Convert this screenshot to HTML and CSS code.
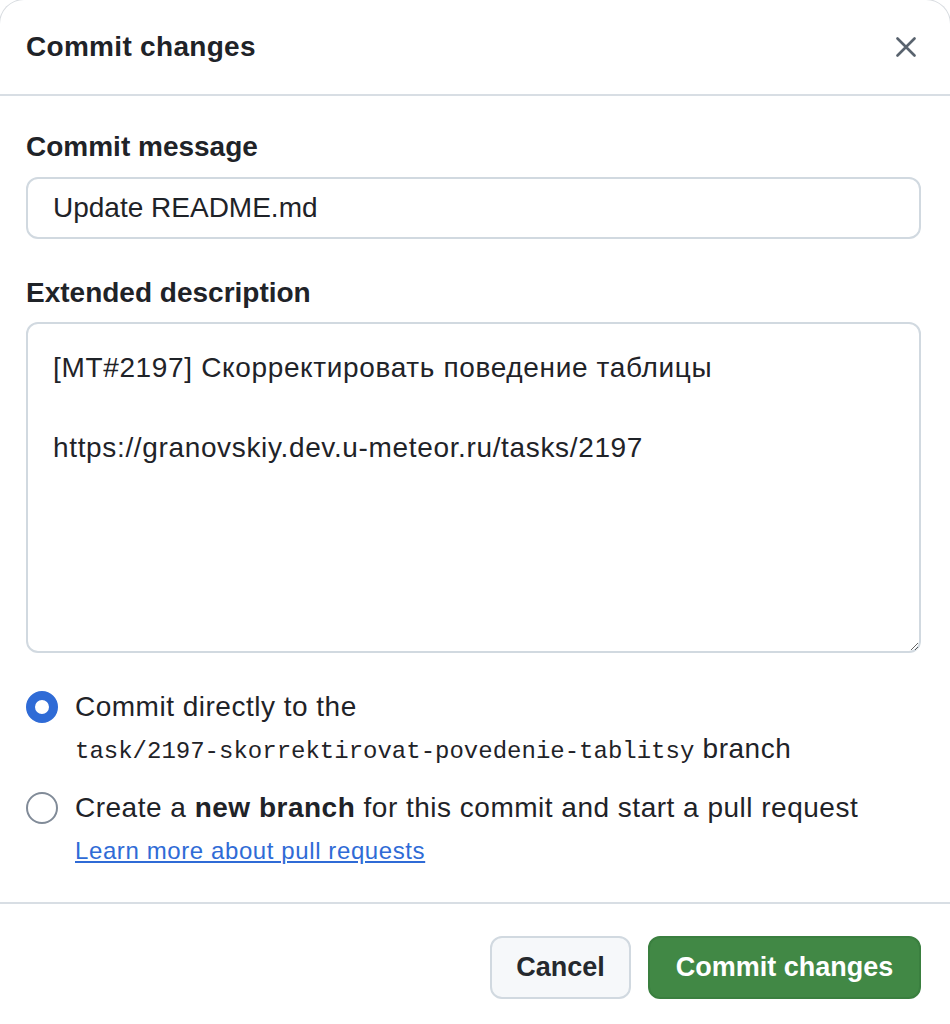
FILE: index.html
```html
<!DOCTYPE html>
<html lang="en">
<head>
<meta charset="utf-8">
<title>Commit changes</title>
<link rel="stylesheet" href="styles.css">
</head>
<body>
<div class="dialog">
  <header class="dialog-header">
    <h1 class="dialog-title">Commit changes</h1>
    <button class="close-btn" aria-label="Close">
      <svg width="20" height="20" viewBox="0 0 20 20"><path d="M1.5 1.5 L18.5 18.5 M18.5 1.5 L1.5 18.5" stroke="#59636e" stroke-width="2.6" stroke-linecap="round"/></svg>
    </button>
  </header>
  <div class="dialog-body">
    <label class="field-label" for="msg">Commit message</label>
    <input id="msg" class="text-input" type="text" value="Update README.md">
    <label class="field-label second" for="desc">Extended description</label>
    <textarea id="desc" class="text-area">[MT#2197] Скорректировать поведение таблицы

https://granovskiy.dev.u-meteor.ru/tasks/2197</textarea>
    <div class="radio-group">
      <label class="radio-row">
        <input type="radio" name="target" class="radio" checked>
        <span class="radio-text">Commit directly to the<br><code class="branch">task/2197-skorrektirovat-povedenie-tablitsy</code> branch</span>
      </label>
      <label class="radio-row">
        <input type="radio" name="target" class="radio">
        <span class="radio-text">Create a <strong>new branch</strong> for this commit and start a pull request<br><a class="learn-link" href="#">Learn more about pull requests</a></span>
      </label>
    </div>
  </div>
  <footer class="dialog-footer">
    <button class="btn btn-default">Cancel</button>
    <button class="btn btn-primary">Commit changes</button>
  </footer>
</div>
</body>
</html>
```
FILE: styles.css
```css
html, body {
  margin: 0;
  padding: 0;
  background: #ffffff;
}
body {
  font-family: "Liberation Sans", Arial, sans-serif;
  color: #1f2328;
}
.dialog {
  width: 950px;
  background: #ffffff;
  border-radius: 24px 24px 0 0;
  box-shadow: 0 0 0 1px #d8dce0;
}
.dialog-header {
  height: 94px;
  border-bottom: 2px solid #d8dee4;
  display: flex;
  align-items: center;
  justify-content: space-between;
  padding: 0 26px;
  box-sizing: content-box;
}
.dialog-title {
  margin: 0;
  font-size: 28px;
  font-weight: 700;
  color: #1f2328;
  letter-spacing: 0.3px;
}
.close-btn {
  border: 0;
  background: transparent;
  padding: 0;
  width: 20px;
  height: 20px;
  margin-right: 8px;
  display: flex;
}
.dialog-body {
  padding: 31px 29px 0 26px;
  display: flex;
  flex-direction: column;
}
.field-label {
  font-size: 28px;
  font-weight: 700;
  line-height: 40px;
  margin-bottom: 10px;
}
.field-label.second {
  margin-top: 34px;
  margin-bottom: 9px;
}
.text-input, .text-area {
  font-family: "Liberation Sans", Arial, sans-serif;
  font-size: 28px;
  color: #1f2328;
  border: 2px solid #d1d9e0;
  border-radius: 12px;
  background: #ffffff;
  box-sizing: border-box;
  outline: none;
  width: 100%;
}
.text-input {
  height: 62px;
  padding: 0 25px;
}
.text-area {
  height: 331px;
  padding: 24px 25px;
  line-height: 40px;
  letter-spacing: 0.65px;
  resize: vertical;
  display: block;
}
.radio-group {
  margin-top: 33px;
  display: flex;
  flex-direction: column;
  gap: 14px;
}
.radio-row {
  display: flex;
  align-items: flex-start;
  gap: 17px;
}
.radio {
  appearance: none;
  -webkit-appearance: none;
  margin: 5px 0 0 0;
  width: 32px;
  height: 32px;
  border-radius: 50%;
  border: 2px solid #818b98;
  box-sizing: border-box;
  flex: none;
  background: #ffffff;
}
.radio:checked {
  border: 9px solid #2f6bd6;
}
.radio-text {
  font-size: 28px;
  line-height: 42px;
  color: #1f2328;
  letter-spacing: 0.5px;
}
.radio-text strong {
  font-weight: 700;
}
.branch {
  font-family: "Liberation Mono", "DejaVu Sans Mono", monospace;
  font-size: 24px;
  letter-spacing: 0;
}
.learn-link {
  font-size: 24px;
  line-height: 44px;
  color: #2f6bd6;
  text-decoration: underline;
  letter-spacing: 0.6px;
}
.dialog-footer {
  margin-top: 29px;
  border-top: 2px solid #d8dee4;
  padding: 32px 29px 30px 26px;
  display: flex;
  justify-content: flex-end;
  gap: 17px;
}
.btn {
  font-family: "Liberation Sans", Arial, sans-serif;
  font-size: 27px;
  font-weight: 700;
  height: 63px;
  border-radius: 12px;
  padding: 0;
  box-sizing: border-box;
  white-space: nowrap;
}
.btn-default {
  background: #f6f8fa;
  border: 2px solid #d1d9e0;
  color: #25292e;
  width: 141px;
}
.btn-primary {
  background: #418845;
  border: 2px solid #3a7f3f;
  color: #ffffff;
  width: 273px;
}
```
